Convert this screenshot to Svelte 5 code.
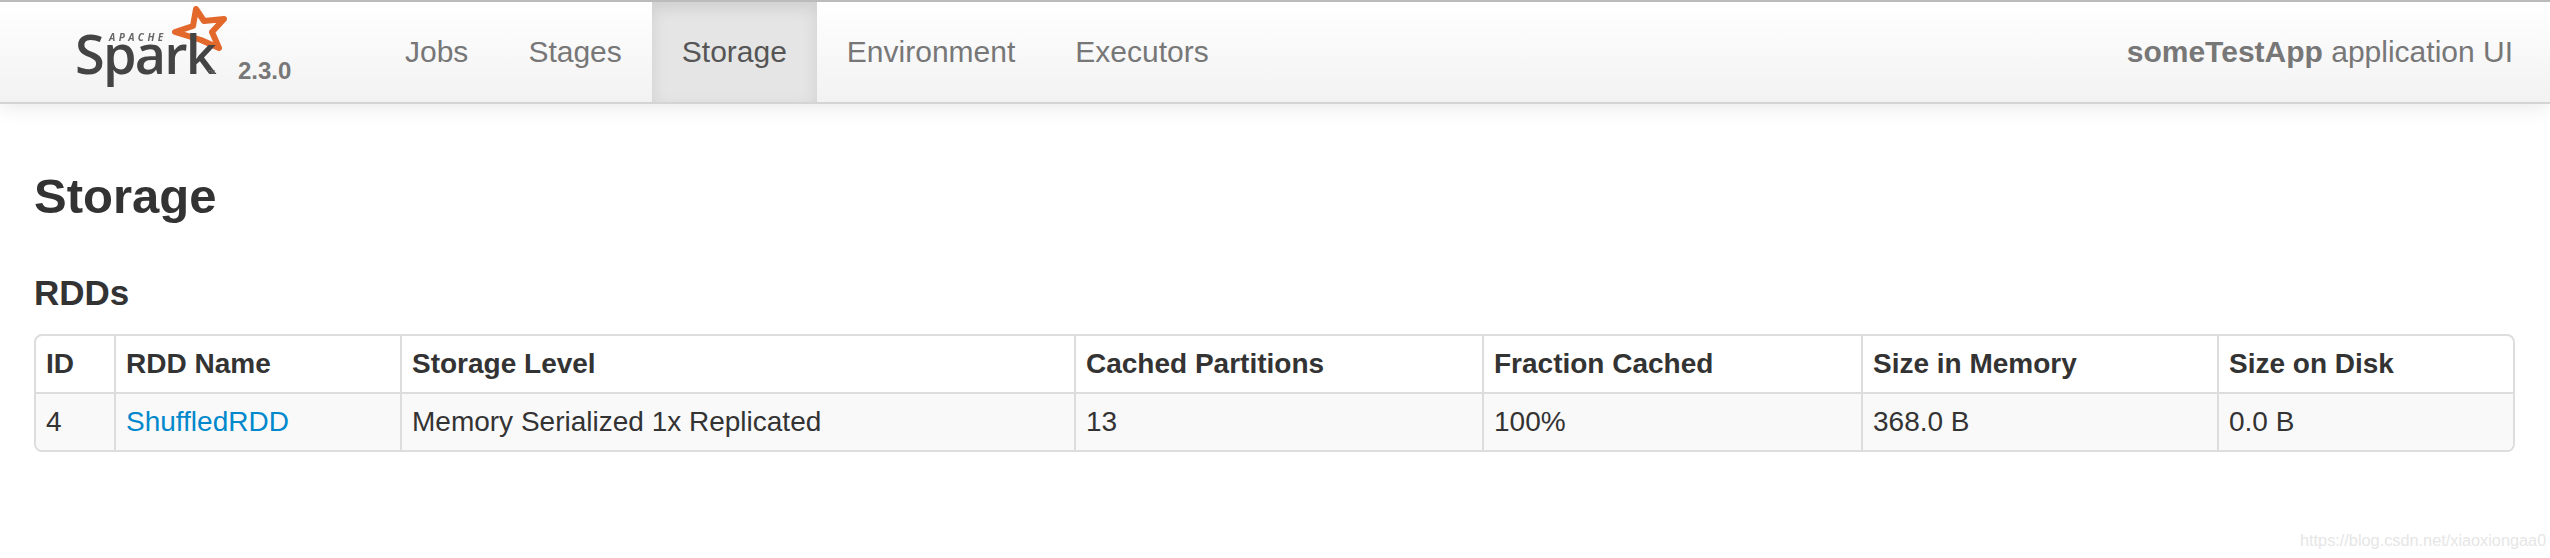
<script>
	const tabs = ['Jobs', 'Stages', 'Storage', 'Environment', 'Executors'];
	const active = 'Storage';
	const columns = [
		'ID',
		'RDD Name',
		'Storage Level',
		'Cached Partitions',
		'Fraction Cached',
		'Size in Memory',
		'Size on Disk'
	];
	const rdds = [
		{
			id: 4,
			name: 'ShuffledRDD',
			level: 'Memory Serialized 1x Replicated',
			partitions: 13,
			fraction: '100%',
			memory: '368.0 B',
			disk: '0.0 B'
		}
	];
</script>

<div class="navbar">
	<a class="brand" href="/">
		<svg class="logo" width="172" height="90" viewBox="0 0 172 90" aria-label="Apache Spark">
			<path
				class="star"
				d="M134 7 L142 19 L162 17 L150 30 L157 46 L139 38 L113 30 L131 24 Z"
			/>
			<text class="apache" x="47" y="39">APACHE</text>
			<text class="spark" x="13" y="72">Spark</text>
			<text class="tm" x="146" y="72">TM</text>
		</svg>
		<span class="version">2.3.0</span>
	</a>
	<ul class="nav">
		{#each tabs as tab}
			<li class:active={tab === active}><a href="/">{tab}</a></li>
		{/each}
	</ul>
	<p class="app-title"><strong>someTestApp</strong> application UI</p>
</div>

<main>
	<h3>Storage</h3>
	<h4>RDDs</h4>
	<table>
		<thead>
			<tr>
				{#each columns as column}
					<th>{column}</th>
				{/each}
			</tr>
		</thead>
		<tbody>
			{#each rdds as rdd}
				<tr>
					<td>{rdd.id}</td>
					<td><a href="/">{rdd.name}</a></td>
					<td>{rdd.level}</td>
					<td>{rdd.partitions}</td>
					<td>{rdd.fraction}</td>
					<td>{rdd.memory}</td>
					<td>{rdd.disk}</td>
				</tr>
			{/each}
		</tbody>
	</table>
</main>

<span class="watermark">https://blog.csdn.net/xiaoxiongaa0</span>

<style>
	:global(body) {
		margin: 0;
		background: #fff;
		color: #333;
		font-family: 'Liberation Sans', Arial, sans-serif;
		font-size: 28px;
		line-height: 40px;
	}

	.navbar {
		display: flex;
		align-items: stretch;
		height: 100px;
		border-top: 2px solid #bbb;
		border-bottom: 2px solid #d4d4d4;
		background: linear-gradient(to bottom, #fff, #f2f2f2);
		box-shadow: 0 2px 20px rgba(0, 0, 0, 0.1);
	}

	.brand {
		display: flex;
		width: 375px;
		flex: none;
		text-decoration: none;
		position: relative;
	}

	.logo {
		margin-left: 62px;
		flex: none;
		overflow: visible;
		filter: blur(0.7px);
	}

	.logo text {
		font-family: 'Open Sans', sans-serif;
	}

	.star {
		fill: none;
		stroke: #e2682c;
		stroke-width: 6;
		stroke-linejoin: round;
	}

	.apache {
		font-size: 10px;
		font-weight: 700;
		font-style: italic;
		letter-spacing: 3.4px;
		fill: #666;
	}

	.spark {
		font-size: 54px;
		font-weight: 600;
		letter-spacing: -1.8px;
		fill: #444;
	}

	.tm {
		font-size: 5px;
		fill: #777;
	}

	.version {
		position: absolute;
		left: 238px;
		top: 52px;
		font-size: 24px;
		line-height: 34px;
		font-weight: 700;
		color: #777;
	}

	.nav {
		display: flex;
		margin: 0;
		padding: 0;
		list-style: none;
	}

	.nav a {
		display: block;
		padding: 30px 30px 0;
		height: 70px;
		font-size: 30px;
		line-height: 40px;
		color: #777;
		text-decoration: none;
	}

	.nav .active a {
		color: #555;
		background: #e5e5e5;
		box-shadow: inset 0 6px 16px rgba(0, 0, 0, 0.1);
	}

	.app-title {
		margin: 0 37px 0 auto;
		padding-top: 30px;
		font-size: 30px;
		line-height: 40px;
		color: #777;
	}

	main {
		padding: 0 35px 0 34px;
	}

	h3 {
		margin: 52px 0 0;
		font-size: 49px;
		line-height: 80px;
		font-weight: 700;
		color: #333;
	}

	h4 {
		margin: 37px 0 0;
		font-size: 35px;
		line-height: 40px;
		font-weight: 700;
		color: #333;
	}

	table {
		width: 100%;
		margin-top: 21px;
		border: 2px solid #ddd;
		border-radius: 8px;
		border-collapse: separate;
		border-spacing: 0;
		table-layout: fixed;
	}

	th,
	td {
		padding: 8px 10px;
		height: 40px;
		text-align: left;
		border-left: 2px solid #ddd;
		line-height: 40px;
	}

	th:first-child,
	td:first-child {
		width: 58px;
		border-left: 0;
	}

	th:nth-child(2) {
		width: 264px;
	}

	th:nth-child(3) {
		width: 652px;
	}

	th:nth-child(4) {
		width: 386px;
	}

	th:nth-child(5) {
		width: 357px;
	}

	th:nth-child(6) {
		width: 334px;
	}

	td {
		border-top: 2px solid #ddd;
		background: #f9f9f9;
	}

	td:first-child {
		border-bottom-left-radius: 6px;
	}

	td:last-child {
		border-bottom-right-radius: 6px;
	}

	td a {
		color: #0088cc;
		text-decoration: none;
	}

	.watermark {
		position: absolute;
		left: 2300px;
		top: 527px;
		font-size: 16.3px;
		line-height: 26px;
		color: #e6e6e6;
		white-space: nowrap;
	}
</style>
